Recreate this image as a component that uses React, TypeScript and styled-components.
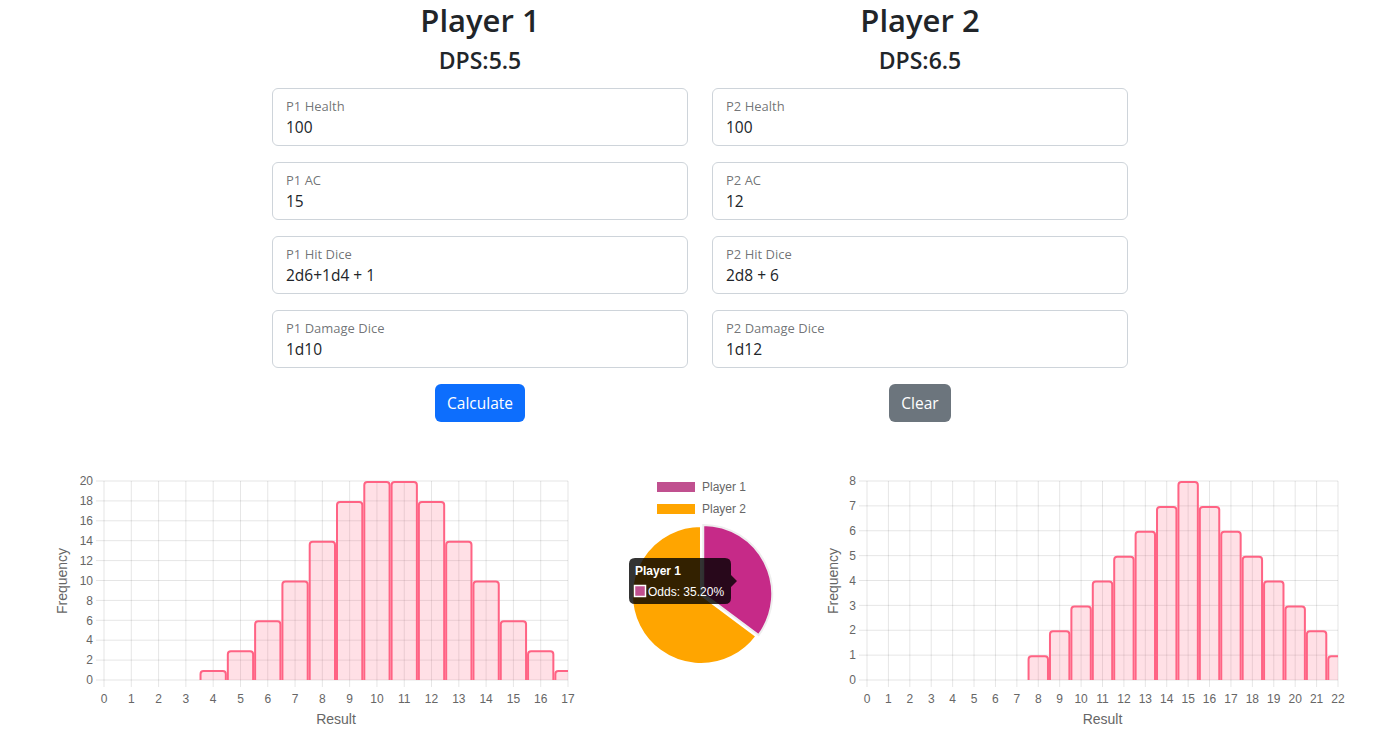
import * as React from "react";
import styled, { createGlobalStyle } from "styled-components";

const GlobalStyle = createGlobalStyle`
  html, body {
    margin: 0;
    padding: 0;
    background: #fff;
    color: #212529;
    font-family: "Open Sans", "Noto Sans", sans-serif;
  }
`;

const Page = styled.div`
  box-sizing: border-box;
  width: 1394px;
  height: 746px;
  padding-top: 2px;
  overflow: hidden;
`;

const Players = styled.div`
  width: 856px;
  margin-left: calc(50% - 425px);
  display: grid;
  grid-template-columns: 416px 416px;
  column-gap: 24px;
`;

const Column = styled.div`
  display: flex;
  flex-direction: column;
  align-items: stretch;
`;

const Title = styled.h1`
  margin: 0 0 8px;
  font-size: 31px;
  font-weight: 600;
  line-height: 1.2;
  text-align: center;
`;

const Dps = styled.h4`
  margin: 0 0 13px;
  font-size: 23px;
  font-weight: 600;
  line-height: 1.2;
  text-align: center;
`;

const Field = styled.div`
  box-sizing: border-box;
  height: 58px;
  margin-bottom: 16px;
  padding: 7px 13px 0;
  border: 1px solid #ced4da;
  border-radius: 6px;
`;

const FieldLabel = styled.div`
  font-size: 13px;
  line-height: 20px;
  color: rgba(33, 37, 41, 0.65);
`;

const FieldValue = styled.div`
  font-size: 15.5px;
  line-height: 22px;
  color: #212529;
`;

const Button = styled.button<{ $variant: "primary" | "secondary" }>`
  align-self: center;
  height: 38px;
  padding: 0 12px;
  border: none;
  border-radius: 6px;
  font-family: inherit;
  font-size: 15.5px;
  color: #fff;
  background: ${(p) => (p.$variant === "primary" ? "#0d6efd" : "#6c757d")};
`;

const ChartRow = styled.div`
  margin-top: 49px;
  padding: 0 44px 0 50px;
  display: flex;
  justify-content: space-between;
  align-items: flex-start;
`;

const Svg = styled.svg`
  display: block;
  font-family: "Liberation Sans", Arial, sans-serif;
`;

type Player = {
  name: string;
  dps: string;
  fields: [string, string][];
  button: string;
  variant: "primary" | "secondary";
};

const players: Player[] = [
  {
    name: "Player 1",
    dps: "DPS:5.5",
    fields: [
      ["P1 Health", "100"],
      ["P1 AC", "15"],
      ["P1 Hit Dice", "2d6+1d4 + 1"],
      ["P1 Damage Dice", "1d10"],
    ],
    button: "Calculate",
    variant: "primary",
  },
  {
    name: "Player 2",
    dps: "DPS:6.5",
    fields: [
      ["P2 Health", "100"],
      ["P2 AC", "12"],
      ["P2 Hit Dice", "2d8 + 6"],
      ["P2 Damage Dice", "1d12"],
    ],
    button: "Clear",
    variant: "secondary",
  },
];

const GRID = "rgba(0,0,0,0.1)";
const TICK = "#666";

interface BarChartProps {
  start: number;
  counts: number[];
  xMax: number;
  yMax: number;
  yStep: number;
  width: number;
  plotLeft: number;
  plotRight: number;
  titleX: number;
  id: string;
}

function BarChart({ start, counts, xMax, yMax, yStep, width, plotLeft, plotRight, titleX, id }: BarChartProps) {
  const top = 10;
  const bottom = 209;
  const sx = (v: number) => plotLeft + (v / xMax) * (plotRight - plotLeft);
  const sy = (v: number) => bottom - (v / yMax) * (bottom - top);
  const xs = Array.from({ length: xMax + 1 }, (_, i) => i);
  const ys = Array.from({ length: yMax / yStep + 1 }, (_, i) => i * yStep);
  const r = 3;

  return (
    <Svg width={width} height={260}>
      <defs>
        <clipPath id={id}>
          <rect x={plotLeft} y={0} width={plotRight - plotLeft} height={bottom + 1} />
        </clipPath>
      </defs>
      {xs.map((v) => (
        <line key={"gx" + v} x1={sx(v)} x2={sx(v)} y1={top} y2={bottom + 7} stroke={GRID} />
      ))}
      {ys.map((v) => (
        <line key={"gy" + v} x1={plotLeft - 8} x2={plotRight} y1={sy(v)} y2={sy(v)} stroke={GRID} />
      ))}
      <g clipPath={`url(#${id})`}>
        {counts.map((c, i) => {
          const v = start + i;
          const x0 = sx(v - 0.5) + 1;
          const x1 = sx(v + 0.5) - 1;
          const y0 = sy(c) + 1;
          const d = `M${x0} ${bottom} L${x0} ${y0 + r} Q${x0} ${y0} ${x0 + r} ${y0} L${x1 - r} ${y0} Q${x1} ${y0} ${x1} ${y0 + r} L${x1} ${bottom}`;
          return (
            <path key={v} d={d} fill="rgba(255,99,132,0.2)" stroke="rgb(255,99,132)" strokeWidth={2} />
          );
        })}
      </g>
      {xs.map((v) => (
        <text key={"tx" + v} x={sx(v)} y={232} fontSize={12} fill={TICK} textAnchor="middle">
          {v}
        </text>
      ))}
      {ys.map((v) => (
        <text key={"ty" + v} x={plotLeft - 11} y={sy(v)} dy="0.35em" fontSize={12} fill={TICK} textAnchor="end">
          {v}
        </text>
      ))}
      <text
        x={titleX}
        y={110}
        fontSize={14}
        fill={TICK}
        textAnchor="middle"
        transform={`rotate(-90 ${titleX} 110)`}
        dy="0.35em"
      >
        Frequency
      </text>
      <text x={(plotLeft + plotRight) / 2} y={253} fontSize={14} fill={TICK} textAnchor="middle">
        Result
      </text>
    </Svg>
  );
}

function PieChart() {
  const cx = 93;
  const cy = 124;
  const R = 69;
  const p1 = 0.352;
  const a = p1 * Math.PI * 2;
  const pt = (ang: number, ox = 0, oy = 0) => [cx + ox + R * Math.sin(ang), cy + oy - R * Math.cos(ang)];
  const mid = a / 2;
  const ox = 2.5 * Math.sin(mid);
  const oy = -2.5 * Math.cos(mid);
  const [s1x, s1y] = pt(0, ox, oy);
  const [e1x, e1y] = pt(a, ox, oy);
  const [s2x, s2y] = pt(a);
  const [e2x, e2y] = pt(Math.PI * 2 - 0.0001);
  const slice1 = `M${cx + ox} ${cy + oy} L${s1x} ${s1y} A${R} ${R} 0 0 1 ${e1x} ${e1y} Z`;
  const slice2 = `M${cx} ${cy} L${s2x} ${s2y} A${R} ${R} 0 1 1 ${e2x} ${e2y} Z`;

  return (
    <Svg width={180} height={200}>
      <rect x={49} y={11} width={38} height={10} fill="#c0508f" />
      <text x={94} y={20} fontSize={12} fill={TICK}>Player 1</text>
      <rect x={49} y={33} width={38} height={10} fill="#ffa500" />
      <text x={94} y={42} fontSize={12} fill={TICK}>Player 2</text>
      <path d={slice2} fill="#ffa500" stroke="#fff" strokeWidth={2} />
      <path d={slice1} fill="#c62a88" stroke="#eee" strokeWidth={2} />
      <g transform="translate(3 0)">
        <path
          d="M24 87 L114 87 Q120 87 120 93 L120 104 L126 110 L120 116 L120 127 Q120 133 114 133 L24 133 Q18 133 18 127 L18 93 Q18 87 24 87 Z"
          fill="rgba(0,0,0,0.8)"
        />
        <text x={24} y={104} fontSize={12} fontWeight="bold" fill="#fff">Player 1</text>
        <rect x={23.5} y={114.5} width={11} height={11} fill="#c0508f" stroke="#fff" strokeWidth={1.5} />
        <text x={37} y={125} fontSize={12} fill="#fff">Odds: 35.20%</text>
      </g>
    </Svg>
  );
}

export default function App() {
  return (
    <Page>
      <GlobalStyle />
      <Players>
        {players.map((p) => (
          <Column key={p.name}>
            <Title>{p.name}</Title>
            <Dps>{p.dps}</Dps>
            {p.fields.map(([label, value]) => (
              <Field key={label}>
                <FieldLabel>{label}</FieldLabel>
                <FieldValue>{value}</FieldValue>
              </Field>
            ))}
            <Button $variant={p.variant}>{p.button}</Button>
          </Column>
        ))}
      </Players>
      <ChartRow>
        <BarChart
          id="clip1"
          start={4}
          counts={[1, 3, 6, 10, 14, 18, 20, 20, 18, 14, 10, 6, 3, 1]}
          xMax={17}
          yMax={20}
          yStep={2}
          width={530}
          plotLeft={54}
          plotRight={518}
          titleX={12}
        />
        <PieChart />
        <BarChart
          id="clip2"
          start={8}
          counts={[1, 2, 3, 4, 5, 6, 7, 8, 7, 6, 5, 4, 3, 2, 1]}
          xMax={22}
          yMax={8}
          yStep={1}
          width={535}
          plotLeft={52}
          plotRight={523}
          titleX={18}
        />
      </ChartRow>
    </Page>
  );
}
